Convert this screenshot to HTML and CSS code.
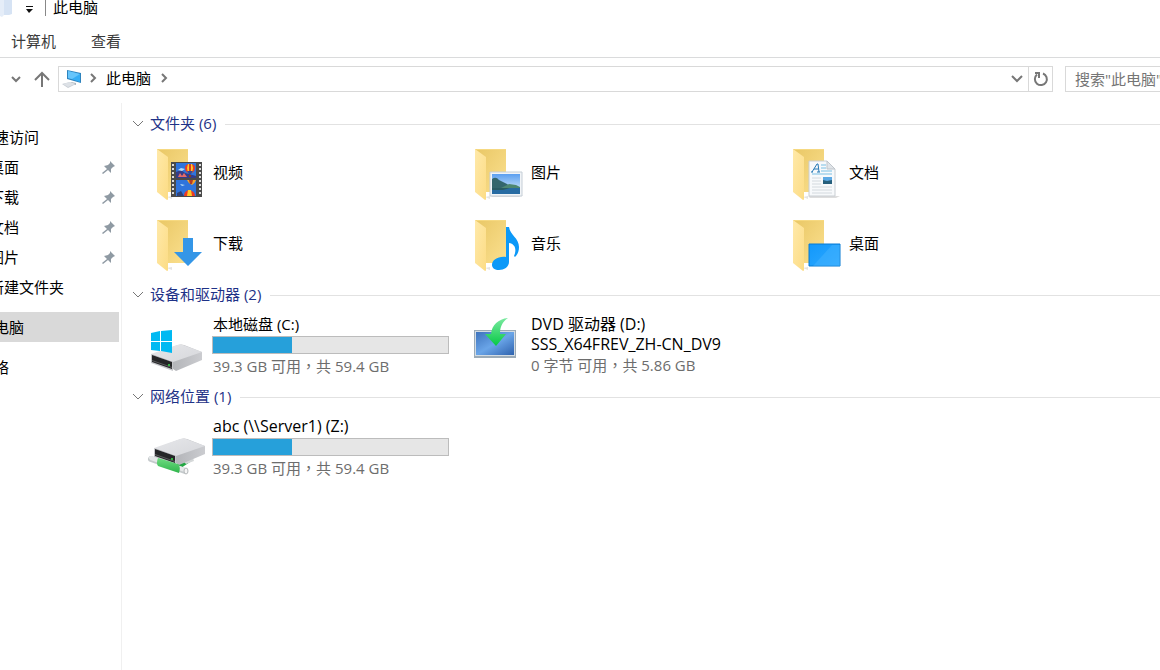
FILE: index.html
```html
<!DOCTYPE html>
<html lang="zh-CN">
<head>
<meta charset="utf-8">
<title>此电脑</title>
<link rel="stylesheet" href="styles.css">
</head>
<body>
<svg class="defs" aria-hidden="true">
  <defs>
    <linearGradient id="flap" x1="0" y1="0" x2="1" y2="1"><stop offset="0" stop-color="#ffe9a9"/><stop offset="1" stop-color="#fcdc85"/></linearGradient>
    <linearGradient id="back" x1="0" y1="0" x2="1" y2="1"><stop offset="0" stop-color="#e9c765"/><stop offset="1" stop-color="#fbe08f"/></linearGradient>
    <linearGradient id="sky" x1="0" y1="0" x2="0" y2="1"><stop offset="0" stop-color="#5b9ff0"/><stop offset="1" stop-color="#e5f4fb"/></linearGradient>
    <linearGradient id="desk" x1="0" y1="0" x2="1" y2="1"><stop offset="0" stop-color="#1298fb"/><stop offset="1" stop-color="#2ea9ff"/></linearGradient>
    <linearGradient id="top" x1="0" y1="0" x2="1" y2="1"><stop offset="0" stop-color="#e6e7ea"/><stop offset="1" stop-color="#d6d7db"/></linearGradient>
    <linearGradient id="side" x1="0" y1="0" x2="1" y2="0"><stop offset="0" stop-color="#a2a4a8"/><stop offset="1" stop-color="#cbccd0"/></linearGradient>
    <linearGradient id="screen" x1="0" y1="0" x2="1" y2="1"><stop offset="0" stop-color="#3d73bd"/><stop offset=".5" stop-color="#6aa5e8"/><stop offset="1" stop-color="#2e62ae"/></linearGradient>
    <linearGradient id="green" x1="0" y1="0" x2="0" y2="1"><stop offset="0" stop-color="#7aeaa0"/><stop offset="1" stop-color="#06c845"/></linearGradient>
    <linearGradient id="pipe" x1="0" y1="0" x2="0" y2="1"><stop offset="0" stop-color="#6fdc82"/><stop offset="1" stop-color="#2fb54b"/></linearGradient>
    <g id="folder">
      <path d="M20 49l5 2 0-3z" fill="#e4e4e4"/>
      <path d="M10 1h31v43H20z" fill="url(#back)"/>
      <path d="M10 1h31v1H12z" fill="#f6d981"/>
      <path d="M10 1l11 8v42q0 1-1 1L10 44z" fill="url(#flap)"/>
    </g>
    <g id="disk">
      <path d="M2 17L29 7q3-1 6 0l18 7v8L27 33 24 31z" fill="url(#side)"/>
      <path d="M2 16L28 7q3-1 6 0l19 7-29 10z" fill="url(#top)"/>
      <path d="M2 16l22 8v9L2 25z" fill="#c6c7cb"/>
      <path d="M3 17l20 7v7L3 24z" fill="#252628"/>
      <path d="M3 22l20 7v1L3 23z" fill="#5c5c5e"/>
      <circle cx="20" cy="27" r="1" fill="#37e34a"/>
    </g>
    <g id="pin"><path d="M8 0l5 5-2 1-2 2v4l-3-3-5 4-1-1 5-4-3-3 4-1 2-2z" fill="#8f9aa3"/></g>
    <g id="chevron"><path d="M1 2l5 5 5-5" fill="none" stroke="#777" stroke-width="1"/></g>
    <g id="balloon"><path d="M0-5q5 0 5 4 0 3-3 5h-4q-3-2-3-5 0-4 5-4z" fill="#ed3a24"/><path d="M-2-5h4l1 4-1 5h-4l-1-5z" fill="#ffc928"/><path d="M-1-5h2v9h-2z" fill="#d13e28"/><path d="M-3 2h6l-2 3h-2z" fill="#314a98"/><path d="M-1 6h2v2h-2z" fill="#8a3f18"/></g>
  </defs>
</svg>

<header class="titlebar">
  <svg class="app-icon" viewBox="0 0 12 18" aria-hidden="true"><path d="M0 0h12v14l-3 1H0z" fill="#d6e3f4"/><path d="M0 0h4v15l-2 2-2-1z" fill="#e5edf8"/></svg>
  <button class="quick-menu" aria-label="自定义快速访问工具栏"><svg width="8" height="8" viewBox="0 0 8 8"><path d="M1 1h7v1H1zM1 4h7L4 8z" fill="#111"/></svg></button>
  <h1 class="window-title">此电脑</h1>
</header>
<nav class="ribbon"><a href="#computer">计算机</a><a href="#view">查看</a></nav>

<div class="toolbar">
  <button class="nav-button recent" aria-label="最近位置"><svg width="10" height="8" viewBox="0 0 10 8"><path d="M1 2l4 4 4-4" fill="none" stroke="#777" stroke-width="2"/></svg></button>
  <button class="nav-button up" aria-label="向上"><svg width="16" height="16" viewBox="0 0 16 16"><path d="M8 16V2M1 9l7-7 7 7" fill="none" stroke="#777" stroke-width="2"/></svg></button>
  <div class="address">
    <svg class="pc-icon" width="20" height="18" viewBox="0 0 20 18" aria-hidden="true"><path d="M5 0l14 3v10L5 9z" fill="#2e83bd"/><path d="M6 1l12 3v8L6 8z" fill="#35adf5"/><path d="M6 1l12 3-8 5-4-1z" fill="#66c5fb"/><path d="M9 12l5 1v2l-5-1z" fill="#a8b0b8"/><path d="M0 14l8-2 6 2-8 4z" fill="#c6ccd3"/><path d="M1 14l7-2 5 2-7 3z" fill="#dde1e6"/></svg>
    <svg class="crumb-arrow" width="8" height="10" viewBox="0 0 8 10"><path d="M2 1l4 4-4 4" fill="none" stroke="#777" stroke-width="2"/></svg>
    <a class="crumb" href="#pc">此电脑</a>
    <svg class="crumb-arrow" width="8" height="10" viewBox="0 0 8 10"><path d="M2 1l4 4-4 4" fill="none" stroke="#777" stroke-width="2"/></svg>
    <button class="history" aria-label="历史记录"><svg width="12" height="8" viewBox="0 0 12 8"><path d="M1 1l5 5 5-5" fill="none" stroke="#777" stroke-width="2"/></svg></button>
    <button class="refresh" aria-label="刷新"><svg width="16" height="16" viewBox="0 0 16 16"><path d="M10 2.500A6 6 0 1 1 4 3.500" fill="none" stroke="#777" stroke-width="2"/><path d="M2 2h4v5" fill="none" stroke="#777" stroke-width="2"/></svg></button>
  </div>
  <div class="search"><input type="search" aria-label="搜索此电脑" placeholder='搜索"此电脑"'></div>
</div>

<div class="workspace">
  <nav class="sidebar">
    <ul class="tree">
      <li><a href="#quick">快速访问</a>
        <ul class="subtree">
          <li><a href="#s1">桌面<svg class="pin" viewBox="0 0 13 13"><use href="#pin"/></svg></a></li>
          <li><a href="#s2">下载<svg class="pin" viewBox="0 0 13 13"><use href="#pin"/></svg></a></li>
          <li><a href="#s3">文档<svg class="pin" viewBox="0 0 13 13"><use href="#pin"/></svg></a></li>
          <li><a href="#s4">图片<svg class="pin" viewBox="0 0 13 13"><use href="#pin"/></svg></a></li>
          <li><a href="#s5">新建文件夹</a></li>
        </ul>
      </li>
      <li><a class="selected" href="#pc" aria-current="page">此电脑</a></li>
      <li><a href="#net">网络</a></li>
    </ul>
  </nav>

  <main class="content">
    <section class="group">
      <h2><button class="group-toggle" aria-expanded="true"><svg width="12" height="8" viewBox="0 0 12 8"><use href="#chevron"/></svg>文件夹 (6)</button></h2>
      <div class="tiles">
        <a class="folder" href="#video"><svg class="folder-icon" viewBox="0 0 60 54"><use href="#folder"/>
          <path d="M24 14h31v35H24z" fill="#4a4a4a"/><path d="M29 15h20v15H29zM29 32h20v16H29z" fill="#2f74dc"/>
          <path d="M26 16v32M53 16v32" stroke="#ddd" stroke-width="2" stroke-dasharray="2 2"/>
          <path d="M29 24l5-2 4 3 4 1 7 2v2H29z" fill="#353c87"/><path d="M31 29l2-4 2 3 2-3 3 4z" fill="#e46b68"/><path d="M31 22l3-2 4 1-3 2zM33 36l5 1-3 1z" fill="#b9dff8"/>
          <use href="#balloon" x="43" y="21"/><path d="M40 32h9q-1 3-4 5-4-2-5-5z" fill="#f5a427"/><path d="M42 32h4l-1 4h-2z" fill="#b33b26"/><path d="M37 48q0-5 5-6 6 1 6 6z" fill="#ed3a24"/><path d="M40 48l1-6h3l1 6z" fill="#ffc928"/><path d="M30 45l4-2 3 5h-7z" fill="#304378"/></svg><span>视频</span></a>
        <a class="folder" href="#pictures"><svg class="folder-icon" viewBox="0 0 60 54"><use href="#folder"/><path d="M25 47h33l-4 2H27z" fill="#ddd"/><path d="M25 24h32v24H25z" fill="#f1f4f7" stroke="#c5ced6"/><path d="M27 26h28v20H27z" fill="url(#sky)"/><path d="M27 31q4-3 7 1l8 4 5 4H27z" fill="#33666c"/><path d="M36 40l8-4 7 1 4 2v2H36z" fill="#4e8771"/><path d="M27 40h28v6H27z" fill="#286ca3"/><path d="M27 40h18l-7 2H27z" fill="#295b63"/></svg><span>图片</span></a>
        <a class="folder" href="#docs"><svg class="folder-icon" viewBox="0 0 60 54"><use href="#folder"/><path d="M25 48h32l-4 2H27z" fill="#ddd"/><path d="M26 13h18l8 8v27H26z" fill="#f7f9fb" stroke="#c9ced3"/><path d="M44 13v8h8z" fill="#e0e4e8" stroke="#bfc5cb"/><path d="M29 24l5-8h1l1 8M31 21h4M28 24h2M34 24h3" fill="none" stroke="#2377b5" stroke-width="1"/><path d="M38 17h5M38 20h5M38 23h11M29 26h20" stroke="#7bbfe3"/><path d="M29 30h9M29 33h9M29 36h9M29 39h20M29 42h20M29 45h20" stroke="#d3d9de"/><path d="M40 29h9v7h-9z" fill="#5da9e4"/><path d="M40 32l4 1 5-1v4h-9z" fill="#265f7c"/></svg><span>文档</span></a>
        <a class="folder" href="#downloads"><svg class="folder-icon" viewBox="0 0 60 54"><use href="#folder"/><path d="M36 19h10v14h9L41 47 27 33h9z" fill="#3496e7"/></svg><span>下载</span></a>
        <a class="folder" href="#music"><svg class="folder-icon" viewBox="0 0 60 54"><use href="#folder"/><path d="M41 8h3c1 8 10 11 10 20 0 4-1 7-4 10l-1-1c3-7 1-12-5-13v19c0 5-5 8-10 8-4 0-7-2-7-5 0-5 6-9 14-8z" fill="#0c99f8"/></svg><span>音乐</span></a>
        <a class="folder" href="#desktop"><svg class="folder-icon" viewBox="0 0 60 54"><use href="#folder"/><path d="M26 25h31v22H26z" fill="url(#desk)" stroke="#087ad2"/><path d="M49 26h8v21H30z" fill="#53b9ff" opacity=".35"/></svg><span>桌面</span></a>
      </div>
    </section>

    <section class="group devices">
      <h2><button class="group-toggle" aria-expanded="true"><svg width="12" height="8" viewBox="0 0 12 8"><use href="#chevron"/></svg>设备和驱动器 (2)</button></h2>
      <div class="tiles">
        <a class="drive" href="#c"><svg class="drive-icon" viewBox="0 0 60 60"><use href="#disk" x="2" y="24"/><path d="M4 19l9-2v10H4zM14 17l11-1v11H14zM4 28h9v9l-9-1zM14 28h11v11l-11-2z" fill="#00b9f2"/></svg>
          <span class="details"><span class="name">本地磁盘 (C:)</span><progress value="33.8" max="100" aria-label="已用空间"></progress><span class="space">39.3 GB 可用<span class="comma" lang="zh-TW">，</span>共 59.4 GB</span></span></a>
        <a class="drive" href="#d"><svg class="drive-icon" viewBox="0 0 60 60"><path d="M9 16h42v28H9z" fill="#9cabb7"/><path d="M10 17h40v25H10z" fill="#d3dce3"/><path d="M11 18h38v23H11z" fill="url(#screen)"/><path d="M43 4c-6 4-8 9-8 16h6L31 32 20 20h6C27 11 33 5 43 4z" fill="url(#green)"/></svg>
          <span class="details"><span class="name latin">DVD 驱动器 (D:)</span><span class="name latin">SSS_X64FREV_ZH-CN_DV9</span><span class="space">0 字节 可用<span class="comma" lang="zh-TW">，</span>共 5.86 GB</span></span></a>
      </div>
    </section>

    <section class="group devices">
      <h2><button class="group-toggle" aria-expanded="true"><svg width="12" height="8" viewBox="0 0 12 8"><use href="#chevron"/></svg>网络位置 (1)</button></h2>
      <div class="tiles">
        <a class="drive" href="#z"><svg class="drive-icon" viewBox="0 0 60 60"><path d="M30 48l16-7v3l-12 8z" fill="#23a743"/><path d="M37 46l9-4 1 3-8 3z" fill="#d5d8d9"/><use href="#disk" x="5" y="16"/><path d="M4 43L38 55" stroke="#c5cacc" stroke-width="6" stroke-linecap="round"/><path d="M4 42L38 54" stroke="#e5e8e9" stroke-width="4" stroke-linecap="round"/><path d="M11 42l20 6q3 3 1 9L11 50q-2-3 0-8z" fill="url(#pipe)"/><ellipse cx="39" cy="55" rx="2" ry="3" fill="#f6f6f6" stroke="#b4b8ba"/></svg>
          <span class="details"><span class="name latin">abc (\\Server1) (Z:)</span><progress value="33.8" max="100" aria-label="已用空间"></progress><span class="space">39.3 GB 可用<span class="comma" lang="zh-TW">，</span>共 59.4 GB</span></span></a>
      </div>
    </section>
  </main>
</div>
</body>
</html>
```
FILE: styles.css
```css
* { box-sizing: border-box; }
body {
  margin: 0;
  min-height: 100vh;
  display: flex;
  flex-direction: column;
  overflow-x: hidden;
  background: #fff;
  color: #000;
  font: 15px/20px "Open Sans", "Noto Sans CJK SC", sans-serif;
}
a { color: inherit; text-decoration: none; }
button { border: 0; padding: 0; background: none; color: inherit; font: inherit; display: flex; align-items: center; justify-content: center; }
h1, h2 { margin: 0; font: inherit; }
ul { list-style: none; margin: 0; padding: 0; }
svg { flex: none; display: block; }
.defs { position: absolute; width: 0; height: 0; }

.titlebar { display: flex; height: 26px; align-items: flex-start; }
.app-icon { width: 12px; height: 18px; }
.quick-menu { width: 33px; height: 17px; }
.window-title { height: 16px; padding-left: 7px; border-left: 1px solid #888; line-height: 14px; }
.ribbon { display: flex; gap: 35px; height: 32px; padding: 5px 11px 6px; border-bottom: 1px solid #dadbdc; color: #3c3c3c; }

.toolbar { display: flex; align-items: center; height: 45px; padding: 0 0 3px; }
.nav-button { height: 26px; }
.recent { width: 32px; }
.up { width: 20px; margin-right: 6px; }
.address { flex: 1; display: flex; align-items: center; height: 26px; border: 1px solid #d9d9d9; }
.pc-icon { margin-left: 3px; }
.crumb-arrow { margin: 0 7px 2px; }
.crumb { padding: 0 2px 2px; }
.history { width: 22px; height: 24px; margin-left: auto; }
.refresh { width: 24px; height: 24px; border-left: 1px solid #d9d9d9; }
.search { width: 95px; margin-left: 12px; height: 26px; border: 1px solid #d9d9d9; border-right: 0; overflow: hidden; }
.search input { width: 160px; height: 24px; border: 0; padding: 0 9px; outline: 0; font: inherit; }
.search input::placeholder { color: #757575; opacity: 1; }

.workspace { flex: 1; display: flex; }
.sidebar { width: 122px; padding: 19px 2px 0 0; border-right: 1px solid #f0f0f0; overflow: hidden; }
.tree { display: flex; flex-direction: column; gap: 10px; margin-left: -21px; }
.tree a { display: flex; align-items: center; height: 30px; }
.subtree a { padding-left: 10px; }
.tree .selected { background: #d9d9d9; }
.pin { width: 13px; height: 13px; margin: 0 4px 0 auto; }

.content { flex: 1; min-width: 0; padding-top: 10px; }
.group h2 { display: flex; align-items: center; height: 22px; padding-left: 10px; color: #1e3287; }
.group h2::after { content: ""; flex: 1; height: 1px; margin-left: 9px; background: #e2e2e2; }
.group-toggle { gap: 6px; padding-bottom: 2px; }
.tiles { display: grid; grid-template-columns: repeat(auto-fill, 318px); padding: 4px 0 3px 25px; }
.devices .tiles { padding: 8px 0 10px 25px; }
.folder { display: flex; height: 71px; gap: 6px; padding-top: 9px; }
.folder span { padding-top: 14px; }
.folder-icon { width: 60px; height: 54px; }
.drive { display: flex; gap: 5px; }
.drive-icon { width: 60px; height: 60px; }
.details { display: flex; flex-direction: column; }
.name, .space { padding-left: 1px; }
.latin { font-size: 16px; }
.space { color: #6d6d6d; margin-top: 1px; }
.comma { font-family: "Noto Sans CJK TC", sans-serif; }
progress { appearance: none; width: 237px; height: 18px; margin: 2px 0 1px; border: 1px solid #bcbcbc; background: #e6e6e6; }
progress::-webkit-progress-bar { background: #e6e6e6; }
progress::-webkit-progress-value { background: #26a0da; }
```
